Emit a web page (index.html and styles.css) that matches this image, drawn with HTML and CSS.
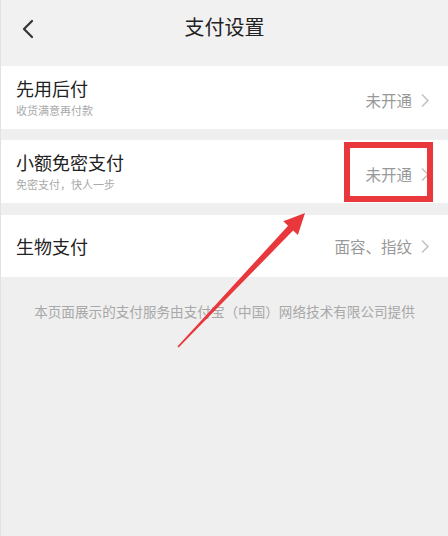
FILE: index.html
```html
<!DOCTYPE html>
<html lang="zh-CN">
<head>
<meta charset="utf-8">
<title>支付设置</title>
<link rel="stylesheet" href="styles.css">
</head>
<body>
<div class="page">
  <header class="nav">
    <span class="back">
      <svg width="14" height="20" viewBox="0 0 14 20"><path d="M11 2 L3 10 L11 18" fill="none" stroke="#333" stroke-width="2.2" stroke-linecap="round" stroke-linejoin="round"/></svg>
    </span>
    <h1 class="title">支付设置</h1>
  </header>

  <section class="list">
    <div class="row row-sub">
      <div class="left">
        <div class="row-title">先用后付</div>
        <div class="row-desc">收货满意再付款</div>
      </div>
      <div class="right">
        <span class="value">未开通</span>
        <svg class="chev" width="10" height="15" viewBox="0 0 10 15"><path d="M2 1.5 L8 7.5 L2 13.5" fill="none" stroke="#c4c4c4" stroke-width="1.6"/></svg>
      </div>
    </div>
    <div class="row row-sub">
      <div class="left">
        <div class="row-title">小额免密支付</div>
        <div class="row-desc">免密支付，快人一步</div>
      </div>
      <div class="right">
        <span class="value">未开通</span>
        <svg class="chev" width="10" height="15" viewBox="0 0 10 15"><path d="M2 1.5 L8 7.5 L2 13.5" fill="none" stroke="#c4c4c4" stroke-width="1.6"/></svg>
      </div>
    </div>
    <div class="row">
      <div class="left">
        <div class="row-title">生物支付</div>
      </div>
      <div class="right">
        <span class="value">面容、指纹</span>
        <svg class="chev" width="10" height="15" viewBox="0 0 10 15"><path d="M2 1.5 L8 7.5 L2 13.5" fill="none" stroke="#c4c4c4" stroke-width="1.6"/></svg>
      </div>
    </div>
  </section>

  <p class="footer">本页面展示的支付服务由支付宝（中国）网络技术有限公司提供</p>

  <svg class="annot" width="448" height="536" viewBox="0 0 448 536">
    <rect x="347" y="145" width="83" height="54" fill="none" stroke="#e8383b" stroke-width="6"/>
    <polygon fill="#e8383b" points="305,213 297.9,235.1 293.1,230.6 178.6,347.4 177.4,346.6 288.1,225.8 283.3,221.3"/>
  </svg>
</div>
</body>
</html>
```

FILE: styles.css
```css
* { box-sizing: border-box; }
html, body {
  margin: 0;
  padding: 0;
  background: #efefef;
}
body {
  font-family: "Noto Sans CJK SC", "Noto Sans", sans-serif;
  width: 448px;
  height: 536px;
  overflow: hidden;
}
.page {
  position: relative;
  width: 448px;
  height: 536px;
  background: #efefef;
  border-left: 1px solid #e2e2e2;
}
.nav {
  position: relative;
  height: 66px;
  display: flex;
  align-items: flex-start;
  justify-content: center;
  background: #f1f1f1;
}
.back {
  position: absolute;
  left: 20px;
  top: 19px;
  display: flex;
}
.title {
  margin: 12px 0 0;
  font-size: 20px;
  font-weight: 400;
  line-height: 30px;
  color: #222;
  letter-spacing: 0;
}
.list {
  display: flex;
  flex-direction: column;
  gap: 11px;
}
.row {
  height: 63px;
  background: #fff;
  display: flex;
  align-items: center;
  justify-content: space-between;
  padding: 0 18px 0 15px;
}
.row:last-child { height: 62px; margin-top: 1px; }
.left {
  display: flex;
  flex-direction: column;
}
.row-title {
  font-size: 18px;
  line-height: 24px;
  color: #222;
}
.row-sub .left { margin-top: -2px; }
.row-desc {
  margin-top: 3px;
  font-size: 11px;
  line-height: 14px;
  color: #aaa;
}
.right {
  display: flex;
  align-items: center;
  gap: 8px;
}
.row-sub .right { margin-top: 5px; }
.value {
  font-size: 15.5px;
  line-height: 20px;
  color: #999;
}
.chev { display: block; }
.footer {
  margin: 24px 0 0;
  text-align: center;
  font-size: 13.6px;
  line-height: 20px;
  color: #a8a8a8;
}
.annot {
  position: absolute;
  left: -1px;
  top: 0;
  pointer-events: none;
}
```
